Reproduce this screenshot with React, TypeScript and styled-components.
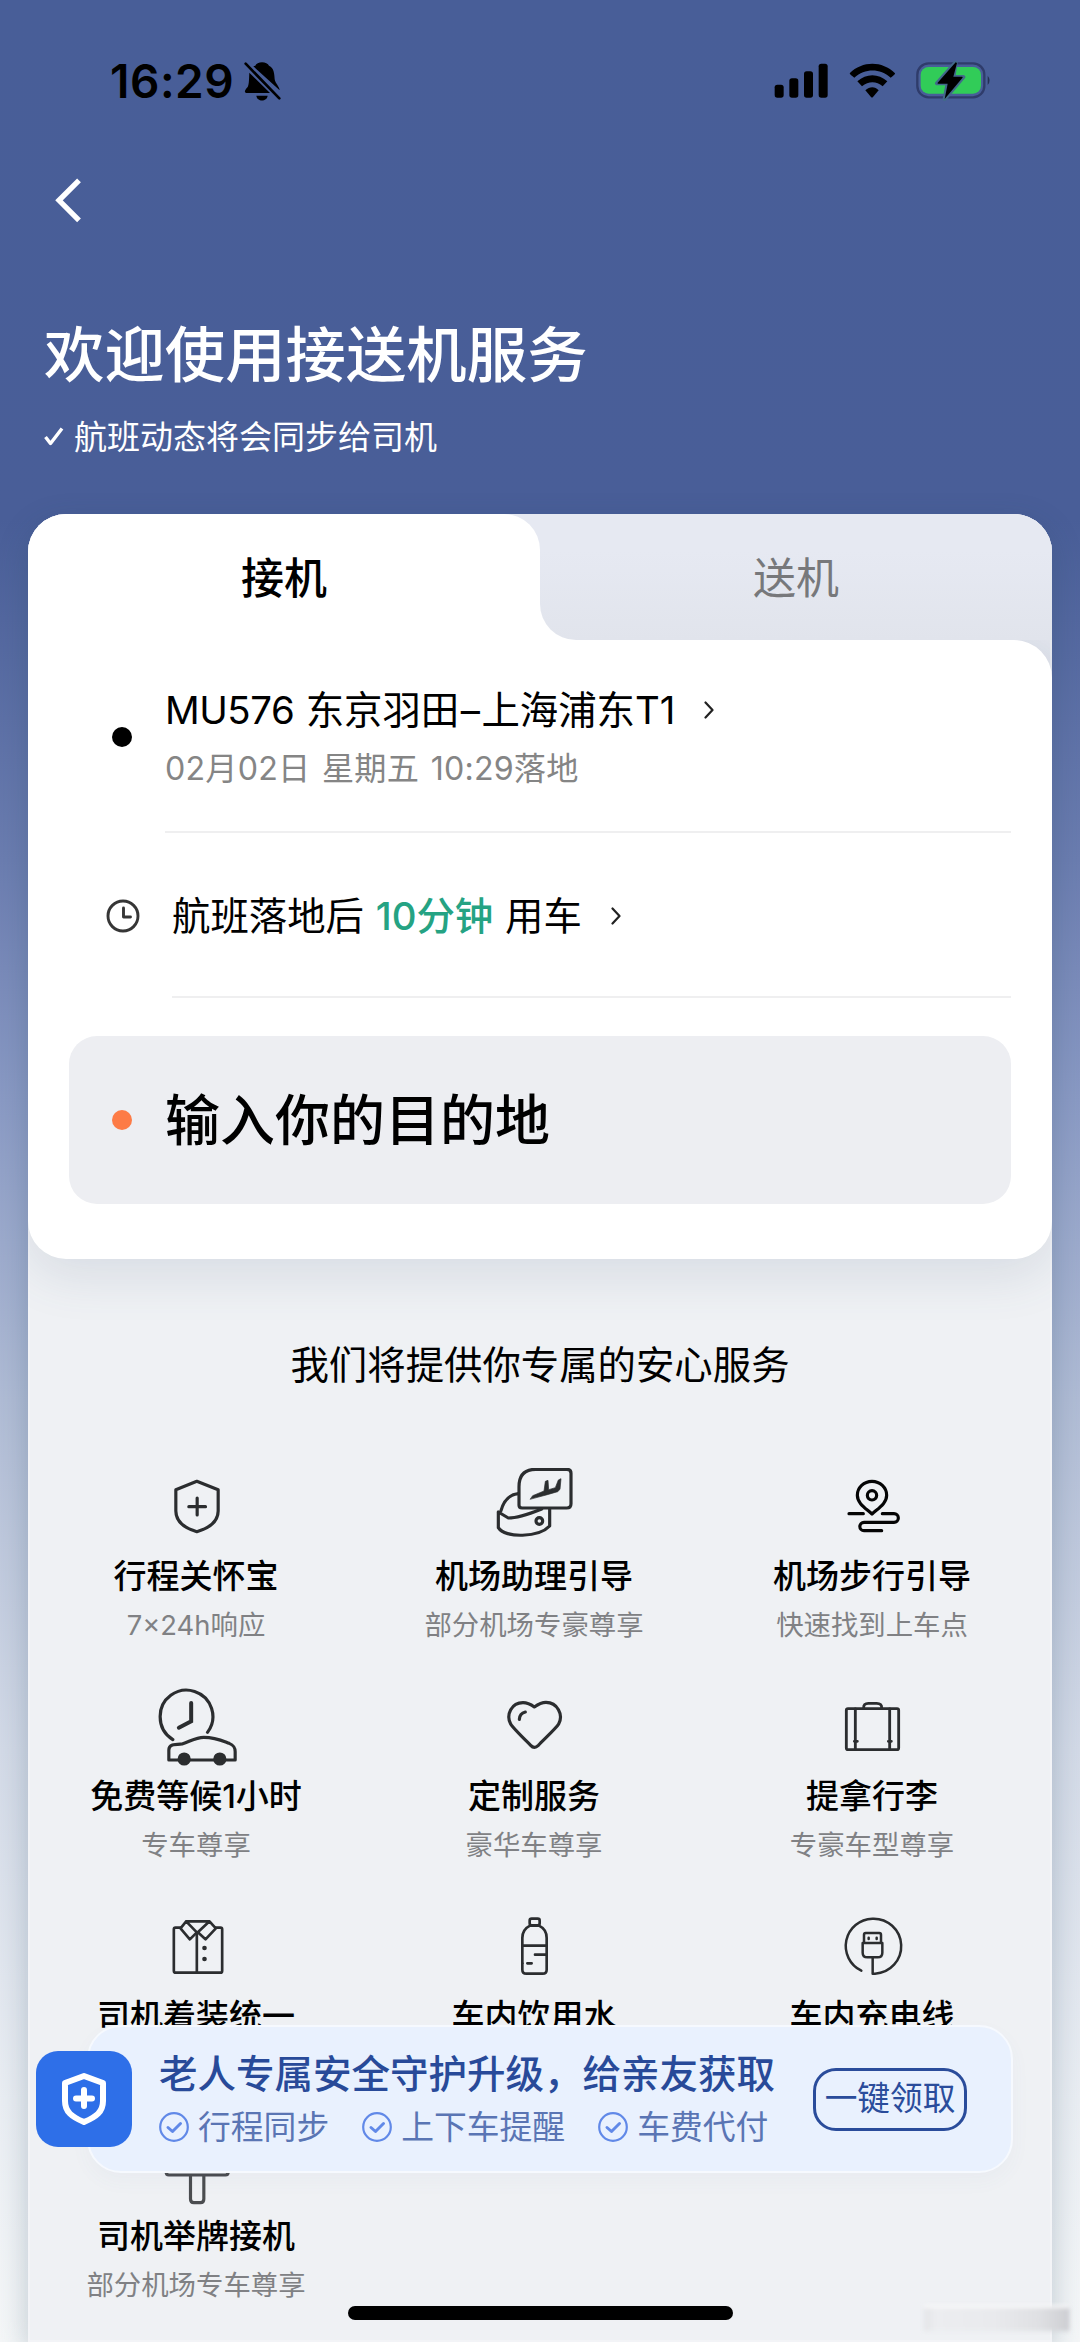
import React from "react";
import styled, { createGlobalStyle } from "styled-components";

const GlobalStyle = createGlobalStyle`
  * { box-sizing: border-box; }
  body {
    margin: 0;
    font-family: Inter, "Noto Sans CJK SC", sans-serif;
    color: #000;
  }
`;

const Page = styled.div`
  position: relative;
  width: 1080px;
  height: 2342px;
  overflow: hidden;
  display: flex;
  flex-direction: column;
  background: linear-gradient(
    #485e98 0,
    #495e98 520px,
    #6b7db0 860px,
    #8a9ac4 1100px,
    #b0bcd5 1400px,
    #d3dae7 1750px,
    #eaeef3 2100px,
    #f5f7f8 2342px
  );
`;

const StatusBar = styled.div`
  height: 160px;
  flex: none;
  display: flex;
  align-items: center;
  justify-content: space-between;
  padding: 1px 88px 0 110px;
`;

const StatusGroup = styled.div<{ $gap: number }>`
  display: flex;
  align-items: center;
  gap: ${(p) => p.$gap}px;
`;

const Time = styled.span`
  font-size: 46px;
  line-height: 50px;
  font-weight: 600;
  letter-spacing: 0.5px;
`;

const NavBar = styled.div`
  height: 80px;
  flex: none;
  display: flex;
  align-items: center;
  padding-left: 52px;
`;

const Hero = styled.header`
  height: 274px;
  flex: none;
  padding: 75px 0 0 44px;
  color: #fff;
`;

const Title = styled.h1`
  margin: 0;
  font-size: 60.4px;
  line-height: 80px;
  font-weight: 500;
`;

const Subtitle = styled.div`
  display: flex;
  align-items: center;
  gap: 10px;
  margin-top: 18px;
  font-size: 33px;
  line-height: 48px;
`;

const Panel = styled.main`
  flex: 1;
  margin: 0 28px;
  border-radius: 38px 38px 0 0;
  background: linear-gradient(#e6e9f2 0, #e2e5ed 120px, #dde1e9 170px, #eff1f4 400px);
  box-shadow: 0 10px 30px rgba(40, 75, 100, 0.27), inset 0 0 0 2px rgba(255, 255, 255, 0.25);
  overflow: hidden;
`;

const Tabs = styled.div`
  position: relative;
  z-index: 1;
  display: grid;
  grid-template-columns: 1fr 1fr;
  height: 126px;
  background: linear-gradient(#e6e9f2 60px, #fff 60px);
`;

const Tab = styled.div<{ $active?: boolean }>`
  display: flex;
  align-items: center;
  justify-content: center;
  padding-bottom: 4px;
  font-size: 43px;
  font-weight: ${(p) => (p.$active ? 500 : 400)};
  color: ${(p) => (p.$active ? "#000" : "#77787b")};
  background: ${(p) => (p.$active ? "#fff" : "linear-gradient(#e6e9f2 30%, #e1e4ec)")};
  border-radius: ${(p) => (p.$active ? "0 36px 0 0" : "0 0 0 36px")};
`;

const Card = styled.section`
  height: 619px;
  padding: 0 41px;
  background: #fff;
  border-radius: 0 38px 38px 38px;
  border-top-left-radius: 0;
  box-shadow: 0 16px 50px rgba(70, 95, 125, 0.14);
`;

const Row = styled.div<{ $height: number }>`
  height: ${(p) => p.$height}px;
  display: flex;
  align-items: stretch;
`;

const Marker = styled.div<{ $width: number }>`
  width: ${(p) => p.$width}px;
  flex: none;
  display: flex;
  align-items: center;
  padding-left: ${(p) => (p.$width > 100 ? 36.5 : 43)}px;
`;

const Dot = styled.span<{ $color: string }>`
  width: 20px;
  height: 20px;
  border-radius: 50%;
  background: ${(p) => p.$color};
`;

const RowBody = styled.div`
  flex: 1;
  display: flex;
  flex-direction: column;
  justify-content: center;
  padding-top: 3px;
  border-bottom: 2px solid #efeff0;
`;

const Line = styled.div<{ $gap: number }>`
  display: flex;
  align-items: center;
  gap: ${(p) => p.$gap}px;
  font-size: 38.4px;
  line-height: 56px;
  word-spacing: 1px;
  white-space: pre;
`;

const FlightNumber = styled.span`
  letter-spacing: -0.45px;
`;

const Dash = styled.span`
  margin: 0 1.5px;
`;

const Landing = styled.div`
  font-size: 32.2px;
  line-height: 48px;
  margin-top: 7px;
  letter-spacing: 0.18px;
  word-spacing: 2.4px;
  color: #858585;
`;

const Accent = styled.span`
  color: #25a383;
  font-weight: 500;
`;

const Destination = styled.div`
  display: flex;
  align-items: center;
  height: 168px;
  margin-top: 38px;
  border-radius: 28px;
  background: #edeef2;
`;

const Placeholder = styled.span`
  padding-bottom: 1px;
  font-size: 55px;
  line-height: 80px;
  font-weight: 500;
`;

const ServicesTitle = styled.h2`
  margin: 78px 0 0;
  text-align: center;
  font-size: 38.4px;
  line-height: 56px;
  font-weight: 400;
`;

const Services = styled.div`
  display: grid;
  grid-template-columns: repeat(3, 338px);
  grid-auto-rows: 220px;
  margin-top: 75px;
  margin-left: -1px;
`;

const Service = styled.div`
  display: flex;
  flex-direction: column;
  align-items: center;
`;

const ServiceName = styled.div`
  margin-top: 6px;
  font-size: 33px;
  line-height: 44px;
  font-weight: 500;
  white-space: nowrap;
`;

const ServiceNote = styled.div`
  margin-top: 10px;
  font-size: 27.4px;
  line-height: 34px;
  color: #808184;
  white-space: nowrap;
`;

const Banner = styled.aside`
  position: absolute;
  left: 36px;
  top: 2025px;
  width: 977px;
  height: 148px;
  display: flex;
  align-items: center;
`;

const BannerBadge = styled.div`
  position: relative;
  z-index: 1;
  width: 96px;
  height: 96px;
  margin-right: -45px;
  border-radius: 22px;
  background: #2e6fe8;
  display: flex;
  align-items: center;
  justify-content: center;
`;

const BannerBody = styled.div`
  flex: 1;
  height: 148px;
  display: flex;
  align-items: center;
  justify-content: space-between;
  padding: 0 44px 0 70px;
  border: 2px solid #f6f9fe;
  border-radius: 34px;
  background: #e9f1fe;
  box-shadow: 0 8px 20px rgba(70, 95, 150, 0.04);
  color: #284a99;
`;

const BannerTitle = styled.div`
  font-size: 38.5px;
  line-height: 52px;
  font-weight: 500;
  white-space: nowrap;
`;

const Perks = styled.div`
  display: flex;
  gap: 33px;
  margin-top: 4px;
`;

const Perk = styled.div`
  display: flex;
  align-items: center;
  gap: 9px;
  font-size: 32.8px;
  line-height: 46px;
  color: #5a75b4;
  white-space: nowrap;
`;

const ClaimButton = styled.button`
  flex: none;
  width: 154px;
  height: 63px;
  padding: 0 0 2px;
  border: 3px solid #2a4c9b;
  border-radius: 23px;
  background: transparent;
  color: #2a4c9b;
  font: 400 32.7px/50px Inter, "Noto Sans CJK SC", sans-serif;
  white-space: nowrap;
  display: flex;
  align-items: center;
  justify-content: center;
`;

const HomeIndicator = styled.div`
  position: absolute;
  left: 348px;
  top: 2306px;
  width: 385px;
  height: 14px;
  border-radius: 7px;
  background: #000;
`;

const Smudge = styled.div`
  position: absolute;
  left: 924px;
  top: 2305px;
  width: 145px;
  height: 26px;
  border-top: 3px solid #f8f8f9;
  background: linear-gradient(90deg, #e3e4e7 0, #ecedf0 12px, #e9eaed 70px, #dfe0e3 115px, #cfd0d4 143px, #bdbec2);
  filter: blur(2px);
`;

const Glyph = styled.svg`
  display: block;
  flex: none;
  fill: none;
  stroke-linecap: round;
  stroke-linejoin: round;
`;

const Chevron = () => (
  <Glyph width="10" height="18" viewBox="0 0 10 18" stroke="#222" strokeWidth="2.2">
    <path d="M1.5 1.5 8.5 9l-7 7.5" />
  </Glyph>
);

const ClockIcon = () => (
  <Glyph width="34" height="34" viewBox="0 0 34 34" stroke="#363636" strokeWidth="2.9">
    <circle cx="17" cy="17" r="15" />
    <path d="M17.5 9v9h7" />
  </Glyph>
);

const CheckCircle = () => (
  <Glyph width="30" height="30" viewBox="0 0 30 30" stroke="#6189e8" strokeWidth="2.2">
    <circle cx="15" cy="15" r="13.8" />
    <path strokeWidth="3" d="m9 15.5 4.5 4 8-8" />
  </Glyph>
);

interface ServiceItem {
  name: string;
  note?: string;
  box: string;
  stroke?: string;
  width?: number;
  art: React.ReactNode;
}

const services: ServiceItem[] = [
  {
    name: "行程关怀宝",
    note: "7×24h响应",
    box: "271.5 84 270 240",
    art: (
      <>
        <path d="M409 124 473 149V213C473 245 450 263 409 275 368 263 346 245 346 213V149Z" />
        <path d="M410 174v51M385 200h50" />
      </>
    ),
  },
  {
    name: "机场助理引导",
    note: "部分机场专豪尊享",
    box: "0 24 270 240",
    art: (
      <>
        <path d="M90 136V80Q90 28 140 28H234Q246 28 246 40V131Q246 144 233 144H99Q90 144 90 136Z" />
        <path d="M88 101C60 104 44 122 36 152M28 156 58 174C90 174 125 160 158 147M28 156V203C48 236 150 232 182 198V148" />
        <circle cx="151" cy="183" r="10" />
        <path fill="#2b2d2f" strokeWidth="2" d="M124 117 131 107 165 93 169 64 177 61 179 89 199 83 208 60 216 56 213 88 206 95 175 104Z" />
      </>
    ),
  },
  {
    name: "机场步行引导",
    note: "快速找到上车点",
    box: "801 84 270 240",
    stroke: "#050505",
    art: (
      <>
        <path d="M936 222C916 204 892 190 892 166A44 42 0 0 1 980 166C980 190 956 204 936 222Z" />
        <circle cx="936" cy="166" r="14" />
        <path d="M867 221H910M967 221H1002A13 13 0 0 1 1002 247H912A12.500 12.500 0 0 0 912 272H965" />
      </>
    ),
  },
  {
    name: "免费等候1小时",
    note: "专车尊享",
    box: "271.5 744 270 240",
    width: 9.5,
    art: (
      <>
        <path d="M337 899C312 883 299 859 299 831A79 79 0 1 1 441 877" />
        <path strokeWidth="12" strokeLinejoin="miter" d="M392 789V844L355 863" />
        <path d="M325 960V930C325 912 345 913 365 912 390 904 405 892 430 892 465 892 485 902 506 910 520 916 524 922 524 935V960Z" />
        <circle cx="371" cy="957" r="15" fill="#2b2d2f" />
        <circle cx="478" cy="957" r="15" fill="#2b2d2f" />
      </>
    ),
  },
  {
    name: "定制服务",
    note: "豪华车尊享",
    box: "1287 744 270 240",
    art: (
      <>
        <path d="M1423 801C1412 793 1402 788 1389 788 1355 788 1337 824 1352 852 1358 863 1396 900 1412 916Q1423 928 1435 916C1450 900 1490 863 1496 852 1511 824 1492 787 1458 787 1445 787 1434 793 1423 801Z" />
        <path d="M1378 838Q1379 820 1396 816" />
      </>
    ),
  },
  {
    name: "提拿行李",
    note: "专豪车型尊享",
    box: "801 744 270 240",
    width: 8.5,
    art: (
      <>
        <rect x="859" y="806" width="157" height="123" rx="5" />
        <path d="M911 804Q910 790 925 790H950Q966 790 965 804M886 807V928M989 807V928M883 904h9M985 904h9" />
      </>
    ),
  },
  {
    name: "司机着装统一",
    box: "271.5 84 270 240",
    width: 8,
    art: (
      <>
        <path d="M360 143H345Q340 143 340 148V272Q340 278 346 278H480Q485 278 485 272V148Q485 143 480 143H466M409 157V278" />
        <path d="M377 124H447L466 145 435 178 412 157 447 124M377 124 360 145 388 178 409 157 377 124" />
        <circle cx="432" cy="204" r="3" fill="#2b2d2f" />
        <circle cx="432" cy="237" r="3" fill="#2b2d2f" />
      </>
    ),
  },
  {
    name: "车内饮用水",
    box: "1287 84 270 240",
    width: 8,
    art: (
      <>
        <rect x="1409" y="116" width="30" height="20" rx="6" />
        <path d="M1410 137C1392 146 1387 158 1387 174V269Q1387 281 1399 281H1448Q1460 281 1460 269V174C1460 158 1454 145 1437 137ZM1388 197H1460M1425 224H1460M1387 250H1388M1402 250H1415" />
      </>
    ),
  },
  {
    name: "车内充电线",
    box: "801 84 270 240",
    width: 7.5,
    art: (
      <>
        <path d="M904 272A82 82 0 0 1 937 116A82 82 0 0 1 945 281H938V233" />
        <path d="M912 189V164Q912 159 917 159H958Q963 159 963 164V189M908 189H967V218Q967 232 953 232H922Q908 232 908 218ZM926 173v4M950 173v4" />
      </>
    ),
  },
  {
    name: "司机举牌接机",
    note: "部分机场专车尊享",
    box: "271.5 744 270 240",
    width: 9.5,
    art: (
      <>
        <path stroke="#4b4d50" d="M325 790H495Q503 790 503 798V877Q503 885 495 885H325Q317 885 317 877V798Q317 790 325 790ZM390 887V957Q390 968 400 968H420Q430 968 430 957V887" />
      </>
    ),
  },
];

const perks = ["行程同步", "上下车提醒", "车费代付"];

export default function App() {
  return (
    <Page>
      <GlobalStyle />
      <StatusBar>
        <StatusGroup $gap={10}>
          <Time>16:29</Time>
          <Glyph width="37" height="40" viewBox="612 62 111 120">
            <path fill="#000" d="M646 76C650 62 682 62 687 76 702 82 703 100 704 117 706 130 718 138 719 150L640 78ZM628 97 690 158H618C610 154 618 146 623 140 628 130 627 112 628 97ZM649 166H683C681 185 651 185 649 166Z" />
            <path stroke="#000" strokeWidth="8" d="M617 70 718 174" />
          </Glyph>
        </StatusGroup>
        <StatusGroup $gap={20}>
          <Glyph width="55" height="36" viewBox="103 67 165 108">
            <g fill="#000">
              <rect x="105" y="132" width="27" height="39" rx="8" />
              <rect x="149" y="113" width="27" height="58" rx="8" />
              <rect x="193" y="92" width="27" height="79" rx="8" />
              <rect x="237" y="69" width="27" height="102" rx="8" />
            </g>
          </Glyph>
          <Glyph width="47" height="36" viewBox="325 67 141 108">
            <g fill="#000">
              <path d="M327 98C365 60 425 60 463 98Q464 101 450 111C418 82 373 82 341 111Q329 103 327 98Z" />
              <path d="M350 122C377 98 413 98 440 122L426 137C407 121 384 121 364 137Z" />
              <path d="M374 149C387 137 403 137 414 149L397 169Q394 172 391 169Z" />
            </g>
          </Glyph>
          <Glyph width="76" height="40" viewBox="525 62 228 120">
            <rect x="529" y="69" width="201" height="102" rx="34" stroke="#2f3c6b" strokeWidth="7" />
            <rect x="539" y="80" width="181" height="80" rx="24" fill="#31cc58" />
            <path d="M740 106Q752 120 740 134Z" fill="#243052" />
            <path d="M644 66 588 129H620L611 176 667 110H637Z" fill="#000" stroke="#42698a" strokeWidth="12" />
            <path d="M644 66 590 127Q588 130 592 130H620L611 176 664 113Q667 109 663 109H637L648 68Z" fill="#000" />
          </Glyph>
        </StatusGroup>
      </StatusBar>
      <NavBar>
        <Glyph width="32" height="46" viewBox="36 412 96 138">
          <path stroke="#fff" strokeWidth="16" strokeLinecap="butt" strokeLinejoin="miter" d="M117 422 57 482 117 542" />
        </Glyph>
      </NavBar>
      <Hero>
        <Title>欢迎使用接送机服务</Title>
        <Subtitle>
          <Glyph width="20" height="22" viewBox="0 0 20 22">
            <path stroke="#fff" strokeWidth="3.400" strokeLinecap="butt" d="m1.500 11 5 6.500L18 2.500" />
          </Glyph>
          航班动态将会同步给司机
        </Subtitle>
      </Hero>
      <Panel>
        <Tabs>
          <Tab $active>接机</Tab>
          <Tab>送机</Tab>
        </Tabs>
        <Card>
          <Row $height={193}>
            <Marker $width={96}>
              <Dot $color="#000" />
            </Marker>
            <RowBody>
              <Line $gap={29}>
                <span>
                  <FlightNumber>MU576 </FlightNumber>东京羽田<Dash>–</Dash>上海浦东T1
                </span>
                <Chevron />
              </Line>
              <Landing>02月02日 星期五 10:29落地</Landing>
            </RowBody>
          </Row>
          <Row $height={165}>
            <Marker $width={103}>
              <ClockIcon />
            </Marker>
            <RowBody>
              <Line $gap={29}>
                <span>
                  航班落地后 <Accent>10分钟</Accent> 用车
                </span>
                <Chevron />
              </Line>
            </RowBody>
          </Row>
          <Destination>
            <Marker $width={96}>
              <Dot $color="#fd7b46" />
            </Marker>
            <Placeholder>输入你的目的地</Placeholder>
          </Destination>
        </Card>
        <ServicesTitle>我们将提供你专属的安心服务</ServicesTitle>
        <Services>
          {services.map((s) => (
            <Service key={s.name}>
              <Glyph width="90" height="80" viewBox={s.box} stroke={s.stroke ?? "#2b2d2f"} strokeWidth={s.width ?? 9.5}>
                {s.art}
              </Glyph>
              <ServiceName>{s.name}</ServiceName>
              {s.note && <ServiceNote>{s.note}</ServiceNote>}
            </Service>
          ))}
        </Services>
      </Panel>
      <Banner>
        <BannerBadge>
          <Glyph width="46" height="54" viewBox="0 0 46 54" stroke="#fff">
            <path strokeWidth="6" d="M23 4 42 11V29C42 40 35 45 23 50 11 45 4 40 4 29V11Z" />
            <path strokeWidth="6" d="M23 18v16M15 26.500h16" />
          </Glyph>
        </BannerBadge>
        <BannerBody>
          <div>
            <BannerTitle>老人专属安全守护升级，给亲友获取</BannerTitle>
            <Perks>
              {perks.map((p) => (
                <Perk key={p}>
                  <CheckCircle />
                  {p}
                </Perk>
              ))}
            </Perks>
          </div>
          <ClaimButton>一键领取</ClaimButton>
        </BannerBody>
      </Banner>
      <Smudge />
      <HomeIndicator />
    </Page>
  );
}
